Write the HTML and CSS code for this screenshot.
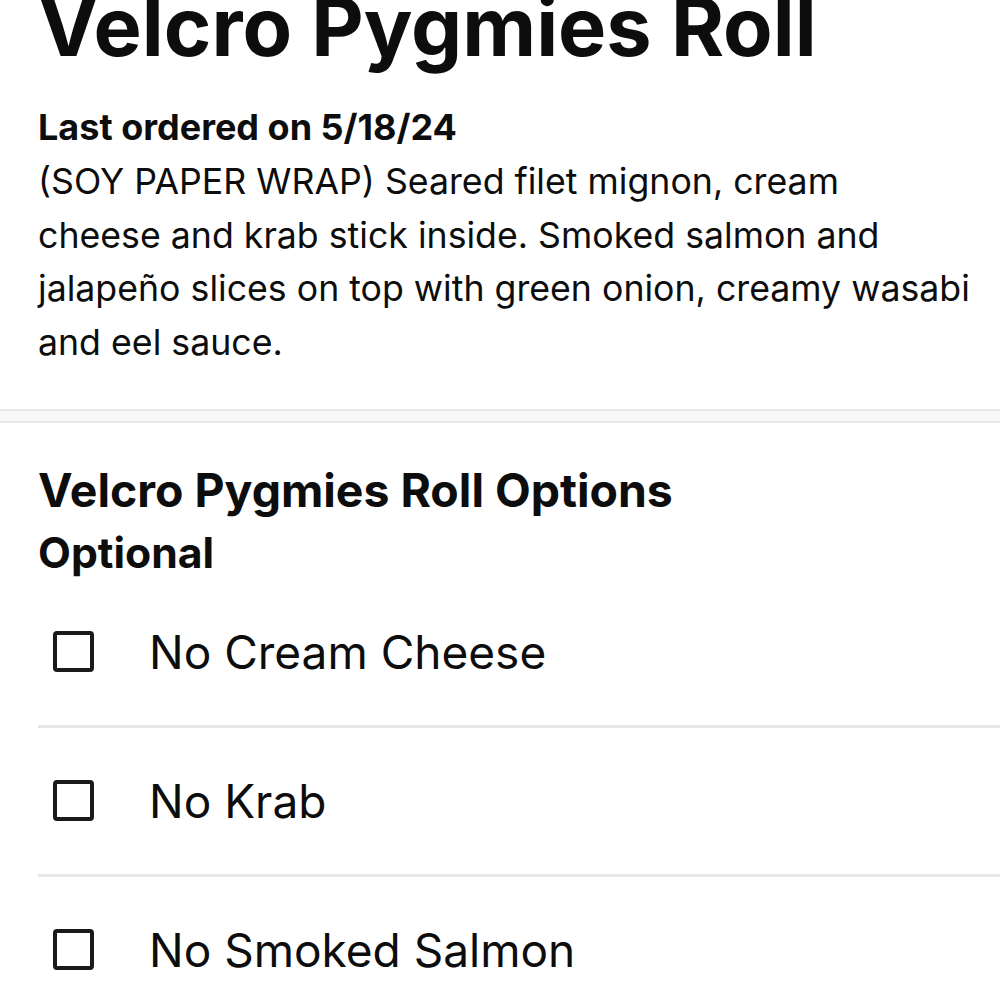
FILE: index.html
```html
<!DOCTYPE html>
<html lang="en">
<head>
<meta charset="utf-8">
<title>Velcro Pygmies Roll</title>
<link rel="stylesheet" href="styles.css">
</head>
<body>
<main class="page">
  <section class="item">
    <h1 class="item-title">Velcro Pygmies Roll</h1>
    <p class="last-ordered">Last ordered on 5/18/24</p>
    <p class="desc">(SOY PAPER WRAP) Seared filet mignon, cream<br>cheese and krab stick inside. Smoked salmon and jalapeño slices on top with green onion, creamy wasabi and eel sauce.</p>
  </section>
  <div class="band"></div>
  <section class="options">
    <h2 class="options-title">Velcro Pygmies Roll Options</h2>
    <p class="options-sub">Optional</p>
    <ul class="option-list">
      <li class="option"><span class="box"></span><span class="label">No Cream Cheese</span></li>
      <li class="option"><span class="box"></span><span class="label">No Krab</span></li>
      <li class="option"><span class="box"></span><span class="label">No Smoked Salmon</span></li>
    </ul>
  </section>
</main>
</body>
</html>
```
FILE: styles.css
```css
* { box-sizing: border-box; }
html, body { margin: 0; padding: 0; background: #fff; }
body {
  font-family: Inter, Lato, "Noto Sans", sans-serif;
  color: #0d0d0d;
  overflow: hidden;
}
.page { width: 1000px; }
.item { padding: 0 18px 0 38px; }
.item-title {
  margin: -13px 0 0 0;
  font-size: 81px;
  line-height: 81px;
  font-weight: 700;
}
.last-ordered {
  margin: 32px 0 0 0;
  font-size: 36px;
  line-height: 55px;
  font-weight: 700;
}
.desc {
  margin: 0;
  font-size: 35.7px;
  line-height: 53.5px;
  font-weight: 400;
}
.band {
  margin-top: 40px;
  height: 14px;
  background: #f7f7f7;
  border-top: 2px solid #e8e8e8;
  border-bottom: 2px solid #e8e8e8;
}
.options { padding-left: 38px; }
.options-title {
  margin: 37px 0 0 0;
  font-size: 46.4px;
  line-height: 60px;
  font-weight: 700;
}
.options-sub {
  margin: 2.5px 0 0 0;
  font-size: 42.7px;
  line-height: 60px;
  font-weight: 700;
}
.option-list { list-style: none; margin: -4px 0 0 0; padding: 0; }
.option {
  display: flex;
  align-items: center;
  gap: 55px;
  height: 149px;
  padding-left: 15px;
  border-bottom: 3px solid #e7e7e7;
}
.box {
  flex: none;
  width: 41px;
  height: 41px;
  border: 4px solid #1a1a1a;
  border-radius: 4px;
}
.label {
  font-size: 46px;
  font-weight: 400;
}
```
